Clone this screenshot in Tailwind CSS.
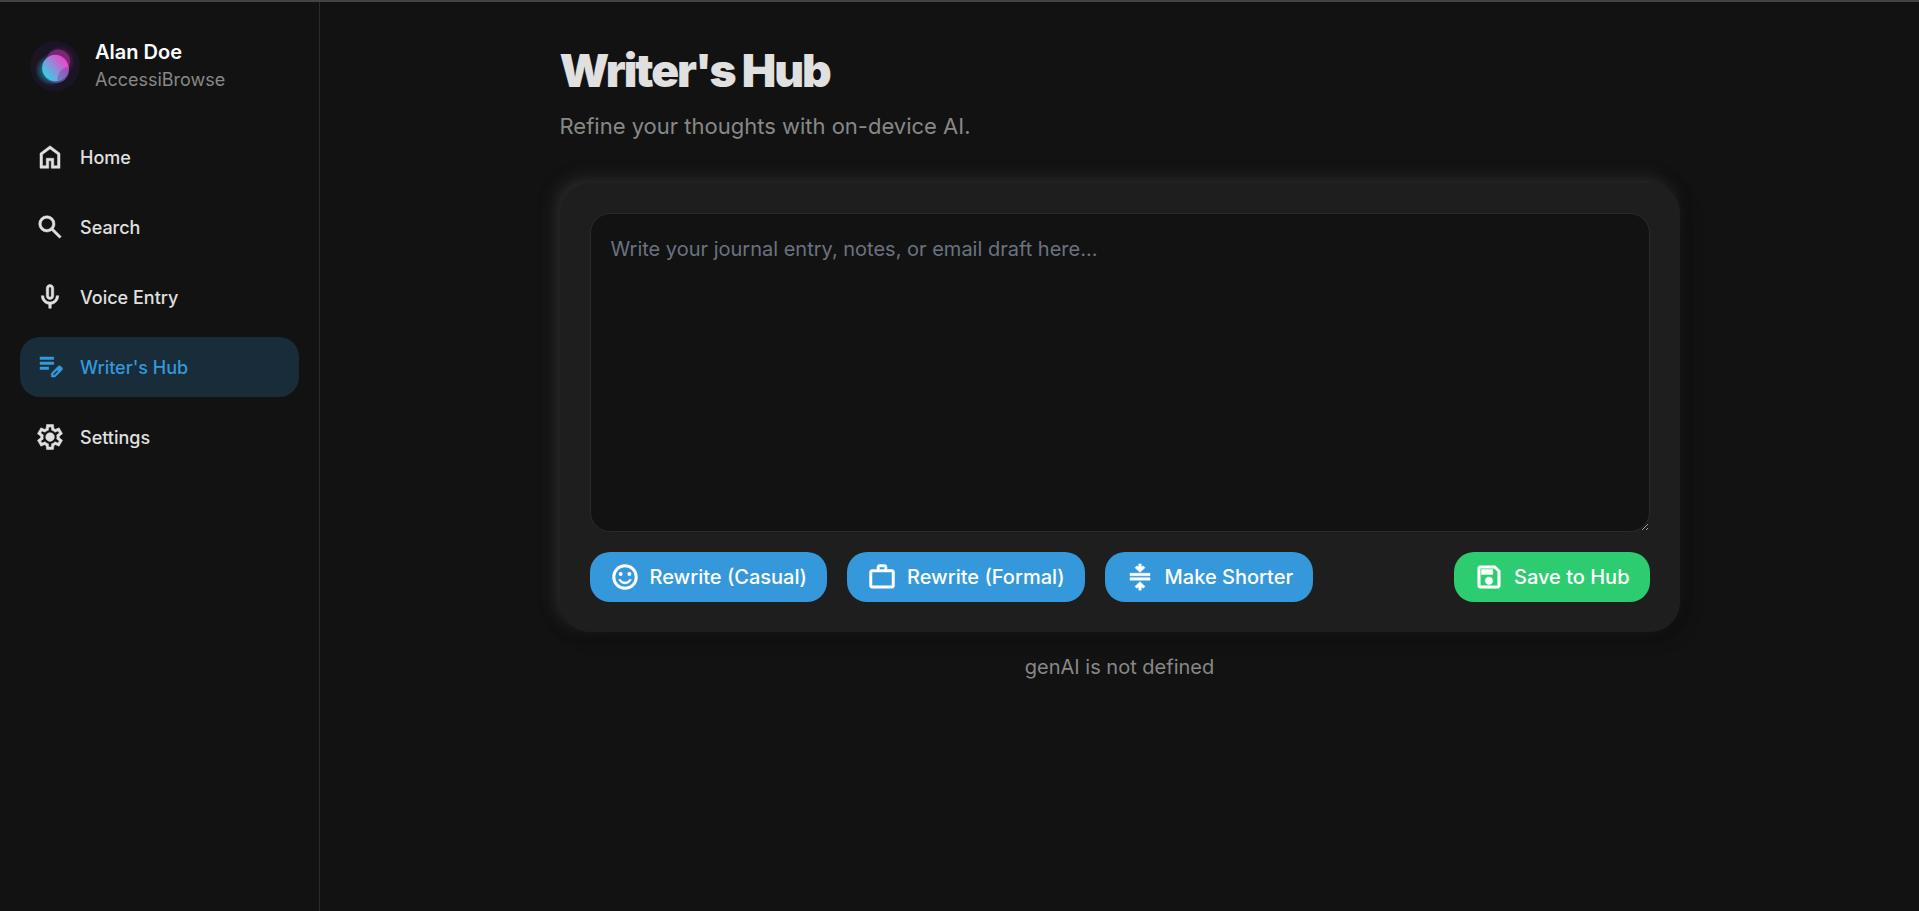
<!DOCTYPE html>
<html lang="en">
<head>
<meta charset="utf-8">
<meta name="viewport" content="width=device-width, initial-scale=1">
<title>Writer's Hub</title>
<script src="https://cdn.jsdelivr.net/npm/@tailwindcss/browser@4"></script>
</head>
<body class="flex min-h-screen flex-col border-t-2 border-[#444444] bg-[#121212] font-['Inter',sans-serif] text-[#e0e0e0]">
<div class="flex grow">
  <aside class="w-80 shrink-0 border-r border-[#2a2a2a] px-5 pt-9">
    <div class="flex items-center gap-[15px] px-[10px]">
      <svg class="size-[50px] shrink-0" viewBox="0 0 50 50" aria-hidden="true">
        <defs>
          <linearGradient id="orb" x1="0.1" y1="0.85" x2="0.85" y2="0.2"><stop offset="0" stop-color="#2fd3ea"/><stop offset="0.5" stop-color="#8f8fdc"/><stop offset="1" stop-color="#ea48c6"/></linearGradient>
          <linearGradient id="low" x1="0" y1="1" x2="1" y2="0"><stop offset="0" stop-color="#35598f"/><stop offset="1" stop-color="#8a3f9c"/></linearGradient>
          <linearGradient id="lens" x1="0" y1="1" x2="1" y2="0"><stop offset="0" stop-color="#5f86cc"/><stop offset="1" stop-color="#b344b0"/></linearGradient>
          <radialGradient id="cy"><stop offset="0.6" stop-color="#18a5c0" stop-opacity="0.5"/><stop offset="1" stop-color="#18a5c0" stop-opacity="0"/></radialGradient>
          <radialGradient id="mg"><stop offset="0.5" stop-color="#b02a9a" stop-opacity="0.4"/><stop offset="1" stop-color="#b02a9a" stop-opacity="0"/></radialGradient>
          <linearGradient id="back" x1="0" y1="1" x2="1" y2="0"><stop offset="0" stop-color="#4a2a70"/><stop offset="1" stop-color="#8a2478"/></linearGradient>
        </defs>
        <circle cx="25" cy="25" r="25" fill="#1b1424"/>
        <circle cx="21" cy="29" r="16" fill="url(#cy)"/>
        <circle cx="30" cy="20" r="15" fill="url(#mg)"/>
        <circle cx="28" cy="20.500" r="12" fill="url(#back)"/>
        <circle cx="26" cy="29" r="13" fill="url(#low)"/>
        <circle cx="25.300" cy="27" r="13.200" fill="url(#orb)"/>
        <path d="M38.400 25.500C32 27 27.500 31 27.300 40A13.200 13.200 0 0 0 38.400 25.500z" fill="url(#lens)"/>
      </svg>
      <div>
        <p class="text-[20px]/7 font-semibold text-white">Alan Doe</p>
        <p class="text-[18px]/7 text-[#888888]">AccessiBrowse</p>
      </div>
    </div>
    <nav class="mt-[33px] flex flex-col gap-[10px] text-[18px] font-medium">
      <a href="#" class="flex h-[60px] items-center gap-[15px] rounded-[20px] px-[15px]">
        <svg class="size-[30px]" viewBox="0 -960 960 960" fill="currentColor" stroke="currentColor" stroke-width="16" aria-hidden="true"><path d="M240-200h120v-240h240v240h120v-360L480-740 240-560v360Zm-80 80v-480l320-240 320 240v480H520v-240h-80v240H160Z"/></svg>
        Home</a>
      <a href="#" class="flex h-[60px] items-center gap-[15px] rounded-[20px] px-[15px]">
        <svg class="size-[30px]" viewBox="0 -960 960 960" fill="currentColor" stroke="currentColor" stroke-width="16" aria-hidden="true"><path d="M784-120 532-372q-30 24-69 38t-83 14q-109 0-184.500-75.500T120-580q0-109 75.500-184.500T380-840q109 0 184.500 75.500T640-580q0 44-14 83t-38 69l252 252-56 56ZM380-400q75 0 127.500-52.500T560-580q0-75-52.500-127.500T380-760q-75 0-127.500 52.500T200-580q0 75 52.500 127.500T380-400Z"/></svg>
        Search</a>
      <a href="#" class="flex h-[60px] items-center gap-[15px] rounded-[20px] px-[15px]">
        <svg class="size-[30px]" viewBox="0 -960 960 960" fill="currentColor" stroke="currentColor" stroke-width="16" aria-hidden="true"><path d="M480-400q-50 0-85-35t-35-85v-240q0-50 35-85t85-35q50 0 85 35t35 85v240q0 50-35 85t-85 35Zm-40 280v-123q-104-14-172-93t-68-184h80q0 83 58.500 141.500T480-320q83 0 141.500-58.500T680-520h80q0 105-68 184t-172 93v123h-80Zm40-360q17 0 28.500-11.500T520-520v-240q0-17-11.500-28.500T480-800q-17 0-28.500 11.500T440-760v240q0 17 11.500 28.500T480-480Z"/></svg>
        Voice Entry</a>
      <a href="#" aria-current="page" class="flex h-[60px] items-center gap-[15px] rounded-[20px] bg-[#3498db]/20 px-[15px] text-[#3498db]">
        <svg class="size-[30px]" viewBox="0 -960 960 960" fill="currentColor" stroke="currentColor" stroke-width="16" aria-hidden="true"><path d="M160-400v-80h280v80H160Zm0-160v-80h440v80H160Zm0-160v-80h440v80H160Zm360 560v-123l221-220q9-9 20-13t22-4q12 0 23 4.500t20 13.500l37 37q8 9 12.500 20t4.500 22q0 11-4 22.500T863-380L643-160H520Zm60-60h38l121-122-18-19-19-18-122 121v38Z"/></svg>
        Writer's Hub</a>
      <a href="#" class="flex h-[60px] items-center gap-[15px] rounded-[20px] px-[15px]">
        <svg class="size-[30px]" viewBox="0 -960 960 960" fill="currentColor" stroke="currentColor" stroke-width="16" aria-hidden="true"><path d="m370-80-16-128q-13-5-24.500-12T307-235l-119 50L78-375l103-78q-1-7-1-13.500v-27q0-6.500 1-13.500L78-585l110-190 119 50q11-8 23-15t24-12l16-128h220l16 128q13 5 24.500 12t22.500 15l119-50 110 190-103 78q1 7 1 13.500v27q0 6.500-2 13.500l103 78-110 190-118-50q-11 8-23 15t-24 12L590-80H370Zm70-80h79l14-106q31-8 57.500-23.500T639-327l99 41 39-68-86-65q5-14 7-29.500t2-31.500q0-16-2-31.500t-7-29.500l86-65-39-68-99 42q-22-23-48.500-38.500T533-694l-13-106h-79l-14 106q-31 8-57.500 23.500T321-633l-99-41-39 68 86 64q-5 15-7 30t-2 32q0 16 2 31t7 30l-86 65 39 68 99-42q22 23 48.500 38.500T427-266l13 106Zm42-180q58 0 99-41t41-99q0-58-41-99t-99-41q-59 0-99.500 41T342-480q0 58 40.500 99t99.500 41Z"/></svg>
        Settings</a>
    </nav>
  </aside>
  <main class="min-w-0 grow px-10 pt-10">
    <div class="mx-auto max-w-[1120px]">
      <h1 class="text-[46px]/[56px] font-black tracking-[-2px]">Writer's Hub</h1>
      <p class="mt-3 text-[22px]/8 text-[#888888]">Refine your thoughts with on-device AI.</p>
      <section class="mt-[41px] rounded-[30px] bg-[#1e1e1e] p-[30px] shadow-[-5px_-5px_15px_#2a2a2a,5px_5px_15px_#0e0e0e]">
        <textarea aria-label="Draft" placeholder="Write your journal entry, notes, or email draft here..." class="block h-[319px] w-full resize-y rounded-[20px] border border-[#2a2a2a] bg-[#121212] p-5 text-[20px]/[30px] placeholder:text-[#6b7280]"></textarea>
        <div class="mt-5 flex flex-wrap gap-5 text-[20px] font-medium text-white">
          <button type="button" class="flex h-[50px] items-center gap-[10px] rounded-[20px] bg-[#3498db] px-5">
            <svg class="size-[30px]" viewBox="0 -960 960 960" fill="currentColor" aria-hidden="true"><circle cx="480" cy="-480" r="360" fill="none" stroke="currentColor" stroke-width="96"/><circle cx="620" cy="-580" r="64"/><circle cx="340" cy="-580" r="64"/><path stroke="currentColor" stroke-width="16" d="M480-260q68 0 123.500-38.500T684-400h-66q-22 37-58.500 58.500T480-320q-43 0-79.500-21.500T342-400h-66q25 63 80.500 101.500T480-260Z"/></svg>
            Rewrite (Casual)</button>
          <button type="button" class="flex h-[50px] items-center gap-[10px] rounded-[20px] bg-[#3498db] px-5">
            <svg class="size-[30px]" viewBox="0 -960 960 960" fill="currentColor" stroke="currentColor" stroke-width="16" aria-hidden="true"><path d="M160-120q-33 0-56.500-23.500T80-200v-440q0-33 23.500-56.500T160-720h160v-80q0-33 23.500-56.500T400-880h160q33 0 56.500 23.500T640-800v80h160q33 0 56.500 23.500T880-640v440q0 33-23.500 56.500T800-120H160Zm0-80h640v-440H160v440Zm240-520h160v-80H400v80Z"/></svg>
            Rewrite (Formal)</button>
          <button type="button" class="flex h-[50px] items-center gap-[10px] rounded-[20px] bg-[#3498db] px-5">
            <svg class="size-[30px]" viewBox="0 -960 960 960" fill="currentColor" stroke="currentColor" stroke-width="16" aria-hidden="true"><path d="M160-380v-80h640v80H160Zm0-140v-80h640v80H160ZM440-60v-110l-64 46-56-56 160-150 160 150-56 56-64-46v110h-80Zm40-570L320-780l56-56 64 46v-110h80v110l64-46 56 56-160 150Z"/></svg>
            Make Shorter</button>
          <button type="button" class="ml-auto flex h-[50px] items-center gap-[10px] rounded-[20px] bg-[#2ecc71] px-5">
            <svg class="size-[30px]" viewBox="0 -960 960 960" fill="currentColor" stroke="currentColor" stroke-width="16" aria-hidden="true"><path d="M840-680v480q0 33-23.500 56.500T760-120H200q-33 0-56.500-23.500T120-200v-560q0-33 23.500-56.500T200-840h480l160 160Zm-80 34L646-760H200v560h560v-446ZM480-240q50 0 85-35t35-85q0-50-35-85t-85-35q-50 0-85 35t-35 85q0 50 35 85t85 35ZM240-560h360v-160H240v160Z"/></svg>
            Save to Hub</button>
        </div>
      </section>
      <p role="status" class="mt-5 text-center text-[20px]/[30px] text-[#888888]">genAI is not defined</p>
    </div>
  </main>
</div>
</body>
</html>
